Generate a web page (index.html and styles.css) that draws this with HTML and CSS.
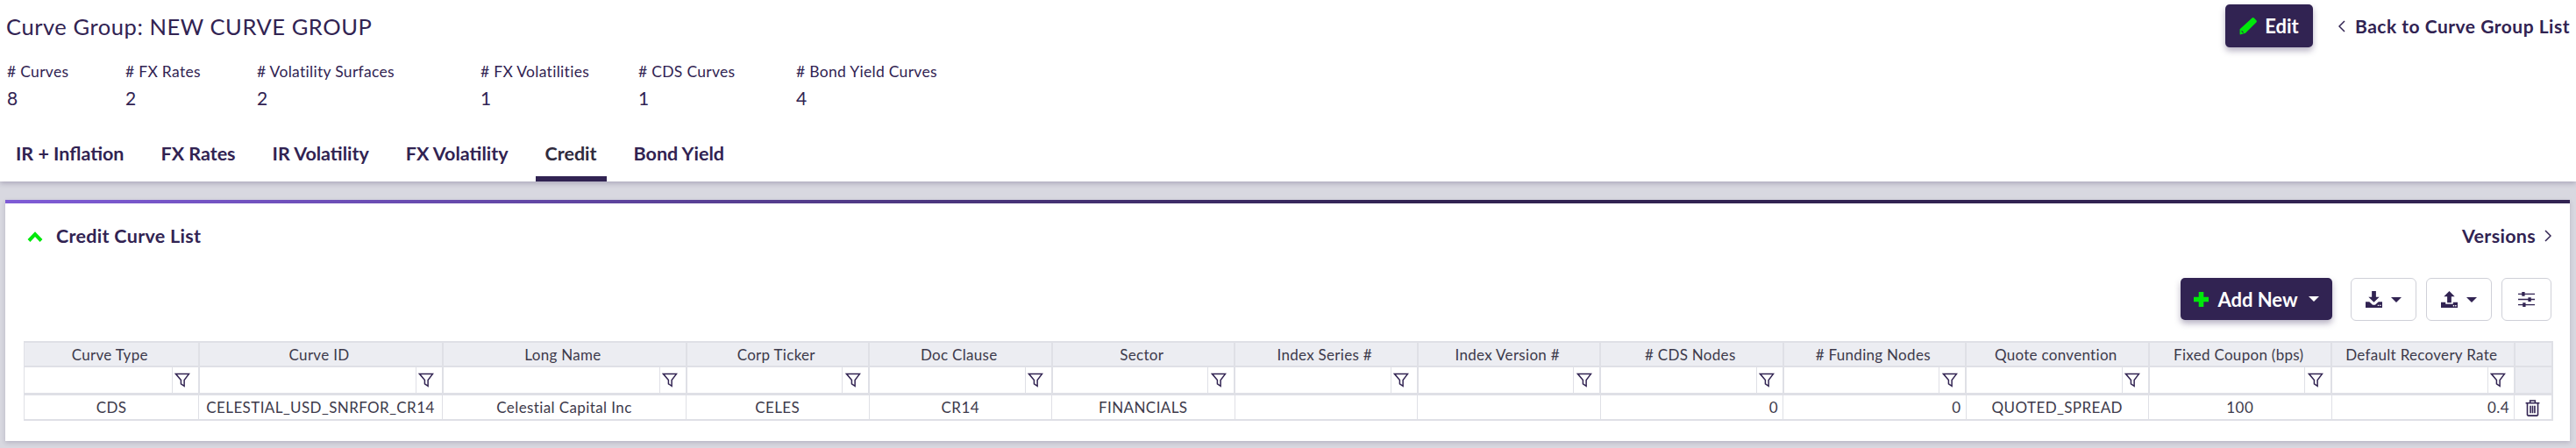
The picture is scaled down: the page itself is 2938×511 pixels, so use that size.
FILE: index.html
```html
<!DOCTYPE html>
<html lang="en">
<head>
<meta charset="utf-8">
<title>Curve Group</title>
<link rel="stylesheet" href="styles.css">
</head>
<body>
<header class="top">
  <div class="head">
    <h1 class="title">Curve Group: NEW CURVE GROUP</h1>
    <div class="actions">
      <button class="btn btn-edit">
        <svg class="ico-pencil" viewBox="0 0 20 20"><path d="M14.600.6a1.500 1.500 0 0 1 2.100 0l2.700 2.700a1.500 1.500 0 0 1 0 2.100L7 17.800 1 19.400l-.4-.4 0-5.800z" fill="#00e80b"/><path d="M2.600 15.400l2 2" stroke="#312352" stroke-width="1.100"/></svg>
        Edit
      </button>
      <a class="back"><svg class="ico-chev" viewBox="0 0 8 14"><path d="M7 1 1 7l6 6" fill="none" stroke="#312352" stroke-width="1.5"/></svg>Back to Curve Group List</a>
    </div>
  </div>
  <dl class="stats">
    <div class="stat"><dt># Curves</dt><dd>8</dd></div>
    <div class="stat"><dt># FX Rates</dt><dd>2</dd></div>
    <div class="stat"><dt># Volatility Surfaces</dt><dd>2</dd></div>
    <div class="stat"><dt># FX Volatilities</dt><dd>1</dd></div>
    <div class="stat"><dt># CDS Curves</dt><dd>1</dd></div>
    <div class="stat"><dt># Bond Yield Curves</dt><dd>4</dd></div>
  </dl>
  <nav class="tabs">
    <a class="tab">IR + Inflation</a>
    <a class="tab">FX Rates</a>
    <a class="tab">IR Volatility</a>
    <a class="tab">FX Volatility</a>
    <a class="tab active">Credit</a>
    <a class="tab">Bond Yield</a>
  </nav>
</header>
<main class="panel">
  <div class="panel-head">
    <div class="panel-title"><svg class="ico-up" viewBox="0 0 18 13"><path d="M2 11.500 9 4.200l7 7.300" fill="none" stroke="#00e80b" stroke-width="4"/></svg>Credit Curve List</div>
    <a class="versions">Versions<svg class="ico-chev" viewBox="0 0 8 14"><path d="M1 1l6 6-6 6" fill="none" stroke="#312352" stroke-width="1.5"/></svg></a>
  </div>
  <div class="toolbar">
    <button class="btn btn-add"><svg class="ico-plus" viewBox="0 0 17 17"><path d="M5.700 0h5.600v5.700H17v5.600h-5.700V17H5.700v-5.700H0V5.700h5.700z" fill="#00e80b"/></svg>Add New<span class="caret caret-white"></span></button>
    <button class="tool tool-wide"><svg class="ico-tool" viewBox="0 0 20 20"><path d="M7.500 0h5v7h4l-6.500 6.500L3.500 7h4zM0 13h4.500l4 3.500h3l4-3.500H20v7H0z" fill="#312352"/><path d="M14.500 16.500h1.500v1.500h-1.500zM17 16.500h1.500v1.500H17z" fill="#fff"/></svg><span class="caret"></span></button>
    <button class="tool tool-wide"><svg class="ico-tool" viewBox="0 0 20 20"><path d="M10 0l6.500 6.500h-4V14h-5V6.500h-4zM0 13.500h5.500v2h9v-2H20V20H0z" fill="#312352"/><path d="M14.500 16.800h1.500v1.500h-1.500zM17 16.800h1.500v1.500H17z" fill="#fff"/></svg><span class="caret"></span></button>
    <button class="tool tool-narrow"><svg class="ico-tool" viewBox="0 0 20 20"><path d="M0 2.800h20v1.400H0zM0 9.300h20v1.400H0zM0 15.800h20v1.400H0z" fill="#312352"/><path d="M4.500 1h3.500v5H4.500zM12 7.500h3.500v5H12zM5.500 14h3.500v5H5.500z" fill="#312352"/></svg></button>
  </div>
  <table class="grid">
    <colgroup>
      <col class="c-type"><col class="c-long"><col class="c-long"><col class="c-std"><col class="c-std"><col class="c-std"><col class="c-std"><col class="c-std"><col class="c-std"><col class="c-std"><col class="c-std"><col class="c-std"><col class="c-std"><col class="c-act">
    </colgroup>
    <thead>
      <tr class="row-head">
        <th>Curve Type</th><th>Curve ID</th><th>Long Name</th><th>Corp Ticker</th><th>Doc Clause</th><th>Sector</th><th>Index Series #</th><th>Index Version #</th><th># CDS Nodes</th><th># Funding Nodes</th><th>Quote convention</th><th>Fixed Coupon (bps)</th><th>Default Recovery Rate</th><th></th>
      </tr>
      <tr class="row-filter">
        <td><div class="filter"><span class="finput"></span><span class="fbtn"><svg class="ico-filter" viewBox="0 0 16 16"><path d="M1 1.500h14L10 8v6.500L6.500 12V8z" fill="none" stroke="#312352" stroke-width="1.400"/></svg></span></div></td>
        <td><div class="filter"><span class="finput"></span><span class="fbtn"><svg class="ico-filter" viewBox="0 0 16 16"><path d="M1 1.500h14L10 8v6.500L6.500 12V8z" fill="none" stroke="#312352" stroke-width="1.400"/></svg></span></div></td>
        <td><div class="filter"><span class="finput"></span><span class="fbtn"><svg class="ico-filter" viewBox="0 0 16 16"><path d="M1 1.500h14L10 8v6.500L6.500 12V8z" fill="none" stroke="#312352" stroke-width="1.400"/></svg></span></div></td>
        <td><div class="filter"><span class="finput"></span><span class="fbtn"><svg class="ico-filter" viewBox="0 0 16 16"><path d="M1 1.500h14L10 8v6.500L6.500 12V8z" fill="none" stroke="#312352" stroke-width="1.400"/></svg></span></div></td>
        <td><div class="filter"><span class="finput"></span><span class="fbtn"><svg class="ico-filter" viewBox="0 0 16 16"><path d="M1 1.500h14L10 8v6.500L6.500 12V8z" fill="none" stroke="#312352" stroke-width="1.400"/></svg></span></div></td>
        <td><div class="filter"><span class="finput"></span><span class="fbtn"><svg class="ico-filter" viewBox="0 0 16 16"><path d="M1 1.500h14L10 8v6.500L6.500 12V8z" fill="none" stroke="#312352" stroke-width="1.400"/></svg></span></div></td>
        <td><div class="filter"><span class="finput"></span><span class="fbtn"><svg class="ico-filter" viewBox="0 0 16 16"><path d="M1 1.500h14L10 8v6.500L6.500 12V8z" fill="none" stroke="#312352" stroke-width="1.400"/></svg></span></div></td>
        <td><div class="filter"><span class="finput"></span><span class="fbtn"><svg class="ico-filter" viewBox="0 0 16 16"><path d="M1 1.500h14L10 8v6.500L6.500 12V8z" fill="none" stroke="#312352" stroke-width="1.400"/></svg></span></div></td>
        <td><div class="filter"><span class="finput"></span><span class="fbtn"><svg class="ico-filter" viewBox="0 0 16 16"><path d="M1 1.500h14L10 8v6.500L6.500 12V8z" fill="none" stroke="#312352" stroke-width="1.400"/></svg></span></div></td>
        <td><div class="filter"><span class="finput"></span><span class="fbtn"><svg class="ico-filter" viewBox="0 0 16 16"><path d="M1 1.500h14L10 8v6.500L6.500 12V8z" fill="none" stroke="#312352" stroke-width="1.400"/></svg></span></div></td>
        <td><div class="filter"><span class="finput"></span><span class="fbtn"><svg class="ico-filter" viewBox="0 0 16 16"><path d="M1 1.500h14L10 8v6.500L6.500 12V8z" fill="none" stroke="#312352" stroke-width="1.400"/></svg></span></div></td>
        <td><div class="filter"><span class="finput"></span><span class="fbtn"><svg class="ico-filter" viewBox="0 0 16 16"><path d="M1 1.500h14L10 8v6.500L6.500 12V8z" fill="none" stroke="#312352" stroke-width="1.400"/></svg></span></div></td>
        <td><div class="filter"><span class="finput"></span><span class="fbtn"><svg class="ico-filter" viewBox="0 0 16 16"><path d="M1 1.500h14L10 8v6.500L6.500 12V8z" fill="none" stroke="#312352" stroke-width="1.400"/></svg></span></div></td>
        <td class="filter-blank"></td>
      </tr>
    </thead>
    <tbody>
      <tr class="row-data">
        <td class="ctr">CDS</td><td class="ctr">CELESTIAL_USD_SNRFOR_CR14</td><td class="ctr">Celestial Capital Inc</td><td class="ctr">CELES</td><td class="ctr">CR14</td><td class="ctr">FINANCIALS</td><td></td><td></td><td class="num">0</td><td class="num">0</td><td class="ctr">QUOTED_SPREAD</td><td class="ctr">100</td><td class="num">0.4</td>
        <td class="ctr"><svg class="ico-trash" viewBox="0 0 16 18"><path d="M.5 3.500h15M5.300 3.500V1h5.400v2.500M2.300 3.500v12.500a1.200 1.200 0 0 0 1.200 1.200h9a1.200 1.200 0 0 0 1.200-1.200V3.500M5.700 6.500v8M8 6.500v8M10.300 6.500v8" fill="none" stroke="#312352" stroke-width="1.500"/></svg></td>
      </tr>
    </tbody>
  </table>
</main>
</body>
</html>
```
FILE: styles.css
```css
* { box-sizing: border-box; }
html, body { margin: 0; padding: 0; }
body {
  width: 2938px;
  height: 511px;
  overflow: hidden;
  background: #d8d8e0;
  color: #312352;
  font-family: "Lato", "Liberation Sans", sans-serif;
}
.top {
  height: 207px;
  background: #fff;
  box-shadow: 0 2px 6px rgba(49, 35, 82, .28);
  position: relative;
  padding: 5px 7px 0 8px;
}
.head { display: flex; justify-content: space-between; align-items: flex-start; height: 62px; }
.title { margin: 0 0 0 -1px; padding-top: 10px; font-size: 25.5px; line-height: 30px; font-weight: 400; letter-spacing: .56px; }
.actions { display: flex; align-items: center; }
.btn {
  display: flex; align-items: center; justify-content: center;
  border: 0; border-radius: 5px; background: #312352; color: #fff;
  font: 700 22px "Lato", sans-serif;
  box-shadow: 0 4px 7px rgba(49, 35, 82, .35);
}
.btn-edit { width: 100px; height: 49px; gap: 9px; }
.ico-pencil { width: 20px; height: 20px; }
.back { display: flex; align-items: center; margin-left: 29px; font-size: 21px; font-weight: 700; letter-spacing: .5px; }
.back .ico-chev { margin-right: 11px; }
.ico-chev { width: 8px; height: 14px; }
.stats { display: grid; grid-template-columns: 135px 150px 255px 180px 180px auto; justify-content: start; margin: 0; height: 66px; padding-top: 5px; }
.stat { display: block; }
.stat dt { font-size: 17.5px; line-height: 20px; letter-spacing: .3px; }
.stat dd { margin: 10px 0 0; font-size: 21px; line-height: 20px; }
.tabs { display: flex; height: 74px; padding-top: 29px; }
.tab { position: relative; padding: 0 11px; margin-right: 20px; font-size: 21.5px; line-height: 26px; font-weight: 700; height: 45px; }
.tab:first-child { padding-left: 10px; }
.tab.active { color: #2f2b3d; }
.tab.active::after { content: ""; position: absolute; left: 0; right: 0; bottom: 0; height: 6px; background: #312352; }
.panel {
  margin: 21px 7px 0 6px;
  height: 275px;
  background: #fff;
  border-top: 4px solid;
  border-image: linear-gradient(90deg, #7f5cd6, #312352 55%) 1;
  box-shadow: 0 2px 5px rgba(49, 35, 82, .2);
  padding: 0 21px 0 21px;
}
.panel-head { display: flex; justify-content: space-between; align-items: center; height: 72px; padding-left: 4px; padding-top: 2px; }
.panel-title { display: flex; align-items: center; gap: 15px; font-size: 21.5px; font-weight: 700; letter-spacing: .3px; }
.ico-up { width: 18px; height: 13px; }
.versions { display: flex; align-items: center; gap: 10px; font-size: 21.5px; font-weight: 700; letter-spacing: .3px; }
.toolbar { display: flex; justify-content: flex-end; height: 49px; margin-top: 13px; }
.btn-add { width: 173px; height: 48px; gap: 10px; margin-right: 21px; }
.ico-plus { width: 17px; height: 17px; }
.caret { display: inline-block; width: 0; height: 0; border-left: 6px solid transparent; border-right: 6px solid transparent; border-top: 6px solid #312352; }
.caret-white { border-top-color: #fff; margin-left: 2px; }
.tool {
  display: flex; align-items: center; justify-content: center; gap: 10px;
  height: 49px; background: #fff; border: 1px solid #cfd0d8; border-radius: 6px; padding: 0;
}
.tool-wide { width: 75px; margin-right: 11px; }
.tool-narrow { width: 57px; }
.ico-tool { width: 19px; height: 19px; }
.grid {
  table-layout: fixed; border-collapse: collapse; width: 2883px; margin-top: 23px;
  font-size: 17px; color: #3d3a4b; letter-spacing: .4px;
  border: 2px solid #dfe0e6; border-left-width: 1px; border-top-width: 2px;
}
.c-type { width: 199px; }
.c-long { width: 278px; }
.c-std { width: 208.500px; }
.c-act { width: 43px; }
.grid th { height: 28px; padding: 0 3px 0 0; background: #ecedf2; font-weight: 400; letter-spacing: .3px; border-right: 2px solid #dfe0e6; border-bottom: 2px solid #dfe0e6; }
.row-filter td { height: 30px; padding: 0; border-right: 2px solid #dfe0e6; border-bottom: 3px solid #dfe0e6; }
.filter { display: flex; height: 29px; }
.finput { flex: 1; }
.fbtn { display: flex; align-items: center; justify-content: center; width: 30px; padding-right: 6px; border-left: 1px solid #dfe0e6; }
.ico-filter { width: 18px; height: 17px; flex: none; }
.filter-blank { background: #ecedf2; }
.row-data td { height: 29px; padding: 0 5px; border-right: 1px solid #dfe0e6; white-space: nowrap; }
.ctr { text-align: center; }
.num { text-align: right; }
.ico-trash { width: 17px; height: 19px; vertical-align: middle; }
```
